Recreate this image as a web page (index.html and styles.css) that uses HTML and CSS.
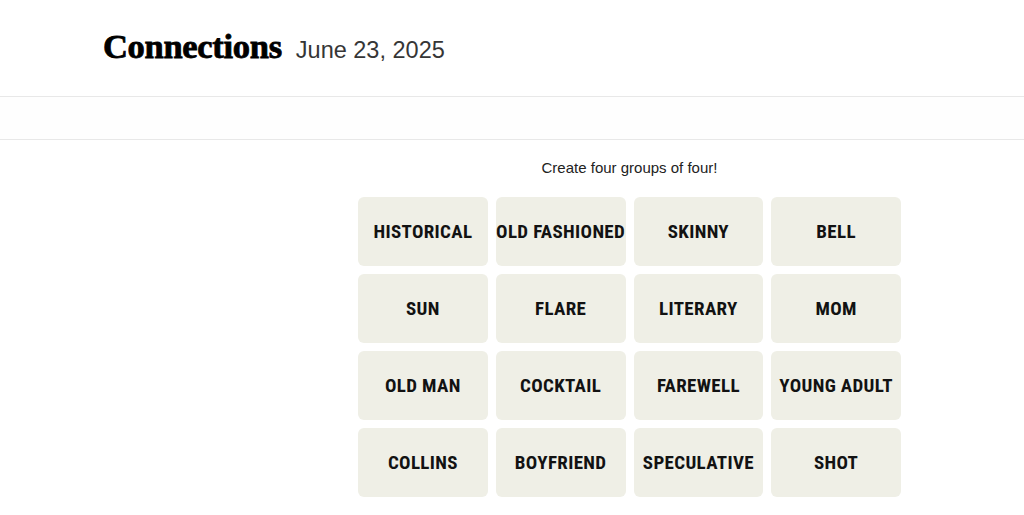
FILE: index.html
```html
<!DOCTYPE html>
<html lang="en">
<head>
<meta charset="utf-8">
<title>Connections</title>
<link rel="stylesheet" href="styles.css">
</head>
<body>
<header class="top">
  <div class="title-row">
    <h1 class="title">Connections</h1>
    <span class="date">June 23, 2025</span>
  </div>
</header>
<div class="toolbar"></div>
<main class="game">
  <p class="prompt">Create four groups of four!</p>
  <div class="board">
    <div class="tile">HISTORICAL</div>
    <div class="tile">OLD FASHIONED</div>
    <div class="tile">SKINNY</div>
    <div class="tile">BELL</div>
    <div class="tile">SUN</div>
    <div class="tile">FLARE</div>
    <div class="tile">LITERARY</div>
    <div class="tile">MOM</div>
    <div class="tile">OLD MAN</div>
    <div class="tile">COCKTAIL</div>
    <div class="tile">FAREWELL</div>
    <div class="tile">YOUNG ADULT</div>
    <div class="tile">COLLINS</div>
    <div class="tile">BOYFRIEND</div>
    <div class="tile">SPECULATIVE</div>
    <div class="tile">SHOT</div>
  </div>
</main>
</body>
</html>
```
FILE: styles.css
```css
* { box-sizing: border-box; }
html, body {
  margin: 0;
  padding: 0;
  background: #ffffff;
  font-family: "Liberation Sans", Arial, sans-serif;
  color: #121212;
}
.top {
  height: 97px;
  border-bottom: 1px solid #e8e8e8;
  padding-left: 103px;
  display: flex;
  align-items: flex-start;
}
.title-row {
  display: flex;
  align-items: baseline;
  gap: 14px;
  padding-top: 26px;
}
.title {
  margin: 0;
  font-family: "Liberation Serif", "Times New Roman", serif;
  font-weight: 700;
  font-size: 34.5px;
  letter-spacing: -0.3px;
  line-height: 40px;
  color: #000;
  -webkit-text-stroke: 0.8px #000;
}
.date {
  font-family: "Liberation Sans", Arial, sans-serif;
  font-size: 23.5px;
  font-weight: 400;
  color: #363636;
}
.toolbar {
  height: 43px;
  background: #fefefe;
  border-bottom: 1px solid #e8e8e8;
}
.game {
  display: flex;
  flex-direction: column;
  align-items: center;
  padding-left: 235px;
}
.prompt {
  margin: 19px 0 0;
  font-size: 15px;
  line-height: 18px;
  color: #222;
}
.board {
  margin-top: 20px;
  display: grid;
  grid-template-columns: repeat(4, 129.75px);
  grid-auto-rows: 69px;
  gap: 8px;
}
.tile {
  background: #efefe6;
  border-radius: 6px;
  display: flex;
  align-items: center;
  justify-content: center;
  font-family: "Liberation Sans Narrow", "Roboto Condensed", "Liberation Sans", sans-serif;
  font-weight: 700;
  font-size: 19px;
  letter-spacing: 0.35px;
  color: #121212;
  white-space: nowrap;
}
```
